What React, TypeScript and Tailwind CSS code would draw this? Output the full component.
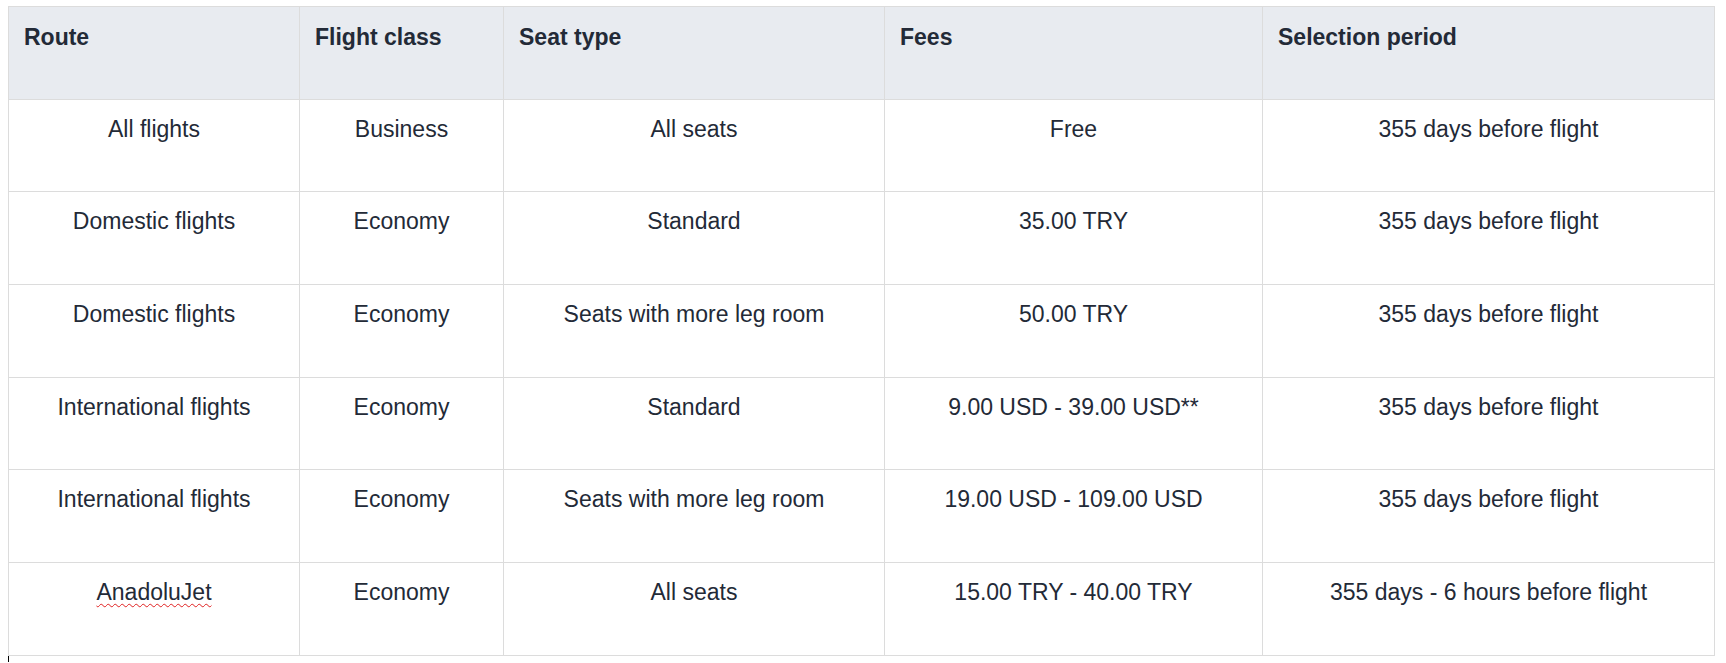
const headers = ["Route", "Flight class", "Seat type", "Fees", "Selection period"];

const rows = [
  ["All flights", "Business", "All seats", "Free", "355 days before flight"],
  ["Domestic flights", "Economy", "Standard", "35.00 TRY", "355 days before flight"],
  ["Domestic flights", "Economy", "Seats with more leg room", "50.00 TRY", "355 days before flight"],
  ["International flights", "Economy", "Standard", "9.00 USD - 39.00 USD**", "355 days before flight"],
  ["International flights", "Economy", "Seats with more leg room", "19.00 USD - 109.00 USD", "355 days before flight"],
  ["AnadoluJet", "Economy", "All seats", "15.00 TRY - 40.00 TRY", "355 days - 6 hours before flight"],
];

export default function App() {
  return (
    <div className="min-h-screen bg-white pt-[6px] pl-[8px] font-['Liberation_Sans',Arial,sans-serif] text-[23px] leading-[28px] text-[#232a37]">
      <table className="table-fixed border-collapse w-[1706px]">
        <colgroup>
          <col className="w-[291px]" />
          <col className="w-[204px]" />
          <col className="w-[381px]" />
          <col className="w-[378px]" />
          <col className="w-[452px]" />
        </colgroup>
        <thead>
          <tr className="h-[92.7px] bg-[#e8ebf0]">
            {headers.map((h) => (
              <th
                key={h}
                className="border border-[#dcdcdc] px-[15px] pt-[16px] text-left align-top font-bold"
              >
                {h}
              </th>
            ))}
          </tr>
        </thead>
        <tbody>
          {rows.map((r, i) => (
            <tr key={i} className="h-[92.7px]">
              {r.map((c, j) => (
                <td
                  key={j}
                  className="border border-[#dcdcdc] px-[15px] pt-[15px] text-center align-top"
                >
                  {c === "AnadoluJet" ? (
                    <span className="underline decoration-wavy decoration-[#e02020] decoration-1 underline-offset-[3px]">
                      {c}
                    </span>
                  ) : (
                    c
                  )}
                </td>
              ))}
            </tr>
          ))}
        </tbody>
      </table>
      <div className="w-px h-[6px] bg-black" />
    </div>
  );
}
